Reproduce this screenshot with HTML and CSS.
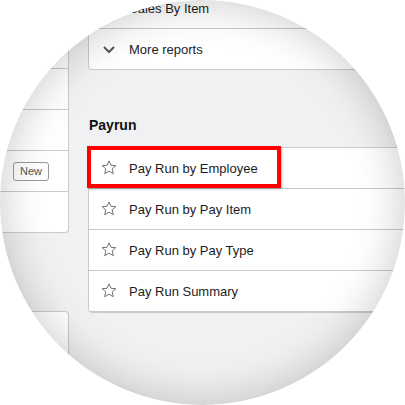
FILE: index.html
```html
<!DOCTYPE html>
<html lang="en">
<head>
    <meta charset="UTF-8">
    <title>Reports - Payrun</title>
    <link rel="stylesheet" href="styles.css">
</head>
<body>
    <div class="lens">
        <div class="page">
            <div class="side">
                <div class="side-card">
                    <div class="side-row"></div>
                    <div class="side-row"></div>
                    <div class="side-row"></div>
                    <div class="side-row"></div>
                    <div class="side-row"><span class="badge">New</span></div>
                    <div class="side-row"></div>
                </div>
                <div class="side-card side-card-lower"></div>
            </div>

            <div class="main">
                <div class="card">
                    <div class="row">
                        <svg class="icon" viewBox="0 0 16 16"><path class="star" d="M8 0.9L10 5.3 14.8 5.7 11.2 8.9 12.3 13.7 8 11.2 3.7 13.7 4.8 8.9 1.2 5.7 6 5.3Z"/></svg>
                        <span>Sales By Item</span>
                    </div>
                    <div class="row">
                        <svg class="icon" viewBox="0 0 16 16"><path class="chevron" d="M3 6l5 5 5-5"/></svg>
                        <span>More reports</span>
                    </div>
                </div>

                <h3 class="group-title">Payrun</h3>
                <div class="card">
                    <div class="row">
                        <svg class="icon" viewBox="0 0 16 16"><path class="star" d="M8 0.9L10 5.3 14.8 5.7 11.2 8.9 12.3 13.7 8 11.2 3.7 13.7 4.8 8.9 1.2 5.7 6 5.3Z"/></svg>
                        <span>Pay Run by Employee</span>
                    </div>
                    <div class="row">
                        <svg class="icon" viewBox="0 0 16 16"><path class="star" d="M8 0.9L10 5.3 14.8 5.7 11.2 8.9 12.3 13.7 8 11.2 3.7 13.7 4.8 8.9 1.2 5.7 6 5.3Z"/></svg>
                        <span>Pay Run by Pay Item</span>
                    </div>
                    <div class="row">
                        <svg class="icon" viewBox="0 0 16 16"><path class="star" d="M8 0.9L10 5.3 14.8 5.7 11.2 8.9 12.3 13.7 8 11.2 3.7 13.7 4.8 8.9 1.2 5.7 6 5.3Z"/></svg>
                        <span>Pay Run by Pay Type</span>
                    </div>
                    <div class="row">
                        <svg class="icon" viewBox="0 0 16 16"><path class="star" d="M8 0.9L10 5.3 14.8 5.7 11.2 8.9 12.3 13.7 8 11.2 3.7 13.7 4.8 8.9 1.2 5.7 6 5.3Z"/></svg>
                        <span>Pay Run Summary</span>
                    </div>
                    <div class="highlight"></div>
                </div>
            </div>
        </div>
    </div>
</body>
</html>
```

FILE: styles.css
```css
body {
    margin: 0;
    background: #fff;
    font-family: "Liberation Sans", Arial, sans-serif;
    color: #1c1d24;
}
.lens {
    position: relative;
    width: 405px;
    height: 405px;
    border-radius: 50%;
    overflow: hidden;
    background: #f0f1f3;
}
.lens::after {
    content: "";
    position: absolute;
    inset: 0;
    border-radius: 50%;
    box-shadow: inset 0 0 45px rgba(0, 0, 0, 0.22);
    pointer-events: none;
}
.page {
    display: grid;
    grid-template-columns: 69px 340px;
    column-gap: 19px;
    margin-top: -13px;
}
.side-card {
    background: #fff;
    border-right: 1px solid #c9cacc;
    border-bottom: 1px solid #c9cacc;
    border-bottom-right-radius: 4px;
}
.side-row {
    height: 40px;
    border-bottom: 1px solid #c9cacc;
    display: flex;
    align-items: center;
    justify-content: flex-end;
    padding-right: 19px;
}
.side-row:last-child {
    border-bottom: none;
}
.side-card-lower {
    margin-top: 78px;
    height: 120px;
    border-top: 1px solid #c9cacc;
    border-bottom: none;
    border-radius: 0 4px 0 0;
}
.badge {
    font-size: 11px;
    line-height: 17px;
    padding: 0 6px;
    color: #555;
    border: 1px solid #999;
    border-radius: 3px;
}
.card {
    position: relative;
    background: #fff;
    border: 1px solid #c9cacc;
    border-radius: 4px;
}
.row {
    height: 40px;
    display: flex;
    align-items: center;
    gap: 12px;
    padding-left: 12px;
    font-size: 13px;
    border-bottom: 1px solid #c9cacc;
}
.row:last-of-type {
    border-bottom: none;
}
.icon {
    width: 16px;
    height: 16px;
    flex: none;
}
.star {
    fill: none;
    stroke: #6f7177;
    stroke-width: 1;
    stroke-linejoin: round;
}
.chevron {
    fill: none;
    stroke: #55575e;
    stroke-width: 2;
}
.group-title {
    margin: 47px 0 14px 1px;
    font-size: 14px;
    line-height: 16px;
    font-weight: bold;
    color: #111;
}
.highlight {
    position: absolute;
    left: -2px;
    top: -2px;
    width: 194px;
    height: 42px;
    box-sizing: border-box;
    border: 4px solid #f00;
    box-shadow: 1px 1px 2px rgba(0, 0, 0, 0.3);
}
```
